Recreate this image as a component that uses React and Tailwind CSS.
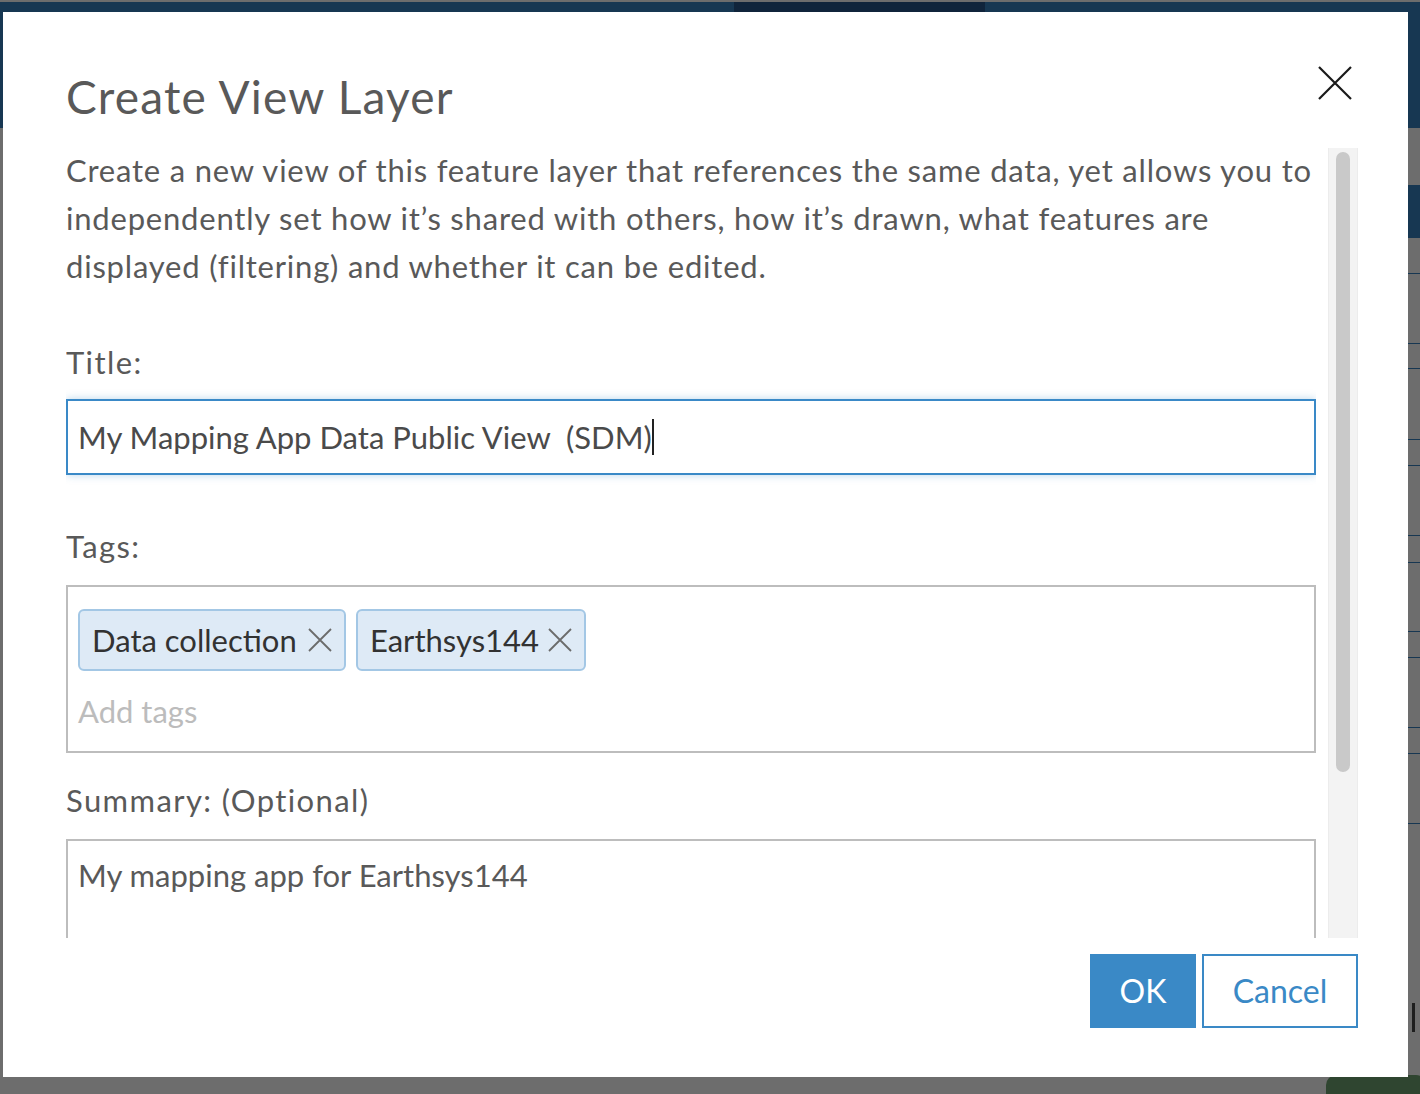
import React from 'react';

const font = { fontFamily: 'Lato, "Open Sans", sans-serif' };

function CloseIcon({ className }) {
  return (
    <svg viewBox="0 0 34 34" className={className} fill="none" stroke="currentColor">
      <path d="M1 1 L33 33 M33 1 L1 33" strokeWidth="2.2" />
    </svg>
  );
}

function Chip({ label, width }) {
  return (
    <div className={`h-[62px] ${width} flex items-center justify-between pl-[12px] pr-[12px] bg-[#deeaf6] border-2 border-[#a3c7e5] rounded-[6px]`}>
      <span className="text-[31px] text-[#323232] leading-none">{label}</span>
      <svg viewBox="0 0 24 24" className="w-[24px] h-[24px] text-[#6b6b6b]" fill="none" stroke="currentColor">
        <path d="M1 1 L23 23 M23 1 L1 23" strokeWidth="1.8" />
      </svg>
    </div>
  );
}

export default function App() {
  return (
    <div className="relative w-[1420px] h-[1094px] bg-[#6d6d6d] overflow-hidden" style={font}>
      {/* page behind the overlay */}
      <div className="h-[2px] bg-[#6d6d6d]" />
      <div className="h-[126px] bg-[#173752] flex">
        <div className="w-[734px]" />
        <div className="w-[251px] bg-[#10243b]" />
      </div>
      <div className="flex justify-end">
        <div className="w-[12px] flex flex-col">
          <div className="h-[57px]" />
          <div className="h-[53px] bg-[#173752]" />
          <div className="h-[35px]" />
          <div className="h-px bg-[#173752]" />
          <div className="h-[69px]" />
          <div className="h-px bg-[#173752]" />
          <div className="h-[24px]" />
          <div className="h-px bg-[#173752]" />
          <div className="h-[70px]" />
          <div className="h-px bg-[#173752]" />
          <div className="h-[25px]" />
          <div className="h-px bg-[#173752]" />
          <div className="h-[69px]" />
          <div className="h-px bg-[#173752]" />
          <div className="h-[26px]" />
          <div className="h-px bg-[#173752]" />
          <div className="h-[68px]" />
          <div className="h-px bg-[#173752]" />
          <div className="h-[25px]" />
          <div className="h-px bg-[#173752]" />
          <div className="h-[69px]" />
          <div className="h-px bg-[#173752]" />
          <div className="h-[25px]" />
          <div className="h-px bg-[#173752]" />
          <div className="h-[69px]" />
          <div className="h-px bg-[#173752]" />
          <div className="h-[179px]" />
          <div className="ml-[4px] w-[3px] h-[29px] bg-[#1e1e1e]" />
        </div>
      </div>
      <div className="absolute left-[1326px] top-[1075px] w-[100px] h-[40px] rounded-[10px] bg-[#2f4530]" />

      {/* modal */}
      <div className="absolute left-[3px] top-[12px] w-[1405px] h-[1065px] bg-white flex flex-col">
        <div className="flex justify-between items-start pl-[63px] pr-[56px] pt-[57px] h-[136px]">
          <h1 className="text-[46px] leading-[56px] tracking-[1.2px] text-[#595959]">Create View Layer</h1>
          <CloseIcon className="w-[34px] h-[34px] mt-[-3px] text-[#1a1a1a]" />
        </div>

        <div className="flex ml-[63px] mr-[50px] h-[790px] gap-[12px]">
          <div className="flex-1 overflow-hidden text-[#595959]">
            <p className="-mt-[2px] text-[31px] leading-[48px] tracking-[0.8px]">
              Create a new view of this feature layer that references the same data, yet allows you to independently set how it’s shared with others, how it’s drawn, what features are displayed (filtering) and whether it can be edited.
            </p>

            <div className="mt-[48px] text-[31px] leading-[48px] tracking-[1.4px]">Title:</div>
            <div className="mt-[13px] h-[76px] border-2 border-[#3a89c7] shadow-[0_0_8px_rgba(58,137,199,0.35)] flex items-center px-[10px]">
              <span className="text-[31px] text-[#4a4a4a] whitespace-pre">My Mapping App Data Public View  (SDM)</span>
              <span className="w-[2px] h-[36px] bg-[#222]" />
            </div>

            <div className="mt-[47px] text-[31px] leading-[48px] tracking-[1.4px]">Tags:</div>
            <div className="mt-[15px] h-[168px] border-2 border-[#bdbdbd] px-[10px] pt-[22px]">
              <div className="flex gap-[10px]">
                <Chip label="Data collection" width="w-[268px]" />
                <Chip label="Earthsys144" width="w-[230px]" />
              </div>
              <div className="mt-[16px] text-[31px] leading-[48px] text-[#bcbcbc]">Add tags</div>
            </div>

            <div className="mt-[23px] text-[31px] leading-[48px] tracking-[1.4px]">Summary: (Optional)</div>
            <div className="mt-[15px] h-[120px] border-2 border-[#bdbdbd] px-[10px] pt-[10px]">
              <div className="text-[31px] leading-[48px]">My mapping app for Earthsys144</div>
            </div>
          </div>

          {/* scrollbar */}
          <div className="w-[30px] bg-[#f3f3f3] border-x border-[#ececec] pt-[4px] px-[7px]">
            <div className="h-[620px] rounded-full bg-[#c9c9c9]" />
          </div>
        </div>

        <div className="flex justify-end gap-[6px] pr-[50px] pt-[16px]">
          <button className="w-[106px] h-[74px] bg-[#3a89c6] text-white text-[32px]">OK</button>
          <button className="w-[156px] h-[74px] border-2 border-[#3a89c6] text-[#3a89c6] text-[32px]">Cancel</button>
        </div>
      </div>
    </div>
  );
}
